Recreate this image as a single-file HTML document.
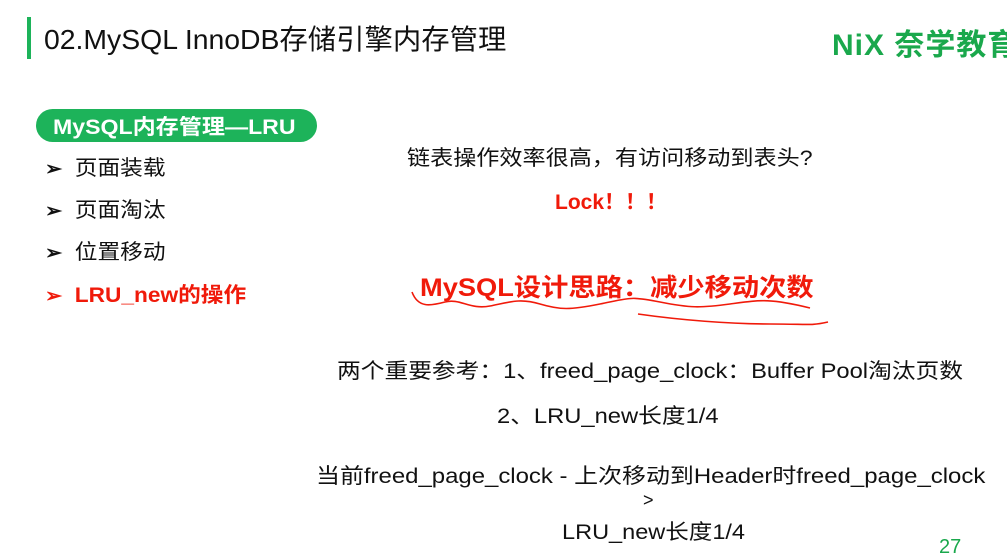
<!DOCTYPE html>
<html><head><meta charset="utf-8"><style>
body{margin:0;width:1007px;height:556px;background:#fff;position:relative;overflow:hidden;font-family:"Liberation Sans","Noto Sans CJK SC",sans-serif;color:#111}
.a{position:absolute;white-space:nowrap;transform-origin:0 0}
</style></head><body>
<div class="a" style="left:27px;top:17px;width:4px;height:42px;background:#1db35a"></div>
<div class="a" style="left:44px;top:18px;font-size:28px;color:#111;transform:scaleX(1.013)">02.MySQL InnoDB存储引擎内存管理</div>
<div class="a" style="left:832px;top:20px;font-size:30px;font-weight:bold;color:#1aa84c;letter-spacing:1px">NiX 奈学教育</div>
<div class="a" style="left:36px;top:109px;width:281px;height:33px;border-radius:17px;background:#1db35a"></div>
<div class="a" style="left:53px;top:111px;font-size:21px;font-weight:bold;color:#fff;transform:scaleX(1.1)">MySQL内存管理—LRU</div>
<div class="a" style="left:45px;top:155px;font-size:21px;line-height:28px;transform:scaleX(1.08)"><b style="font-size:19px">➢</b>&nbsp; 页面装载</div>
<div class="a" style="left:45px;top:197px;font-size:21px;line-height:28px;transform:scaleX(1.08)"><b style="font-size:19px">➢</b>&nbsp; 页面淘汰</div>
<div class="a" style="left:45px;top:239px;font-size:21px;line-height:28px;transform:scaleX(1.08)"><b style="font-size:19px">➢</b>&nbsp; 位置移动</div>
<div class="a" style="left:45px;top:282px;font-size:21px;line-height:28px;color:#f01a0a;font-weight:bold;transform:scaleX(1.08)"><span style="font-size:19px">➢</span>&nbsp; LRU_new的操作</div>
<div class="a" style="left:407px;top:142px;font-size:21px;transform:scaleX(1.1)">链表操作效率很高，有访问移动到表头?</div>
<div class="a" style="left:555px;top:186px;font-size:21px;font-weight:bold;color:#f01a0a">Lock！！！</div>
<div class="a" style="left:420px;top:268px;font-size:25px;font-weight:bold;color:#f01a0a;transform:scaleX(1.09)">MySQL设计思路：减少移动次数</div>
<svg class="a" style="left:400px;top:284px" width="440" height="50"><path d="M12 8 C18 24 30 22 45 18 S70 26 90 22 S120 14 140 20 S170 26 200 20 S230 12 260 18 S300 24 330 20 S370 14 410 24" fill="none" stroke="#f01a0a" stroke-width="1.6"/><path d="M238 30 C280 36 330 40 370 40 S410 42 428 38" fill="none" stroke="#f01a0a" stroke-width="1.6"/></svg>
<div class="a" style="left:337px;top:355px;font-size:21px;transform:scaleX(1.13)">两个重要参考：1、freed_page_clock：Buffer Pool淘汰页数</div>
<div class="a" style="left:497px;top:400px;font-size:21px;transform:scaleX(1.13)">2、LRU_new长度1/4</div>
<div class="a" style="left:316px;top:460px;font-size:21px;transform:scaleX(1.14)">当前freed_page_clock - 上次移动到Header时freed_page_clock</div>
<div class="a" style="left:643px;top:490px;font-size:18px">&gt;</div>
<div class="a" style="left:562px;top:516px;font-size:21px;transform:scaleX(1.12)">LRU_new长度1/4</div>
<div class="a" style="left:939px;top:536px;font-size:20px;color:#1aa84c">27</div>
</body></html>
